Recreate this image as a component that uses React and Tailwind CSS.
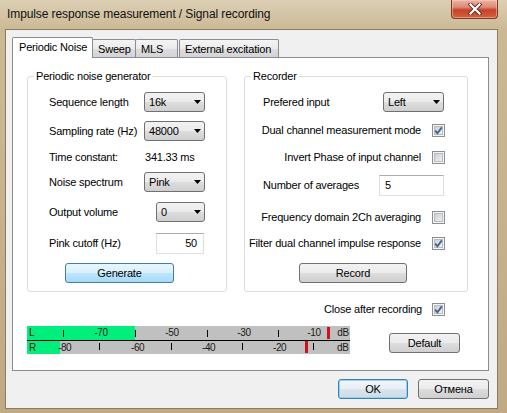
import React from 'react';

const Combo = ({ value, className }) => (
  <div className={`h-[20px] flex items-center pl-[4px] pr-[3px] border border-[#707070] rounded-[3px] bg-[linear-gradient(#f2f2f2,#ebebeb_48%,#dddddd_52%,#cfcfcf)] ${className}`}>
    <span className="flex-1">{value}</span>
    <svg width="7" height="4" viewBox="0 0 7 4"><path d="M0 0H7L3.5 4Z" fill="#000" /></svg>
  </div>
);

const Check = ({ checked }) => (
  <span className="relative w-[13px] h-[13px] shrink-0 border border-[#8e8f8f] bg-[#f4f4f4] p-px flex">
    <span className="flex-1 border border-[#b9bdc2] bg-[linear-gradient(135deg,#cbd0d6,#eef0f2)]" />
    {checked && (
      <svg className="absolute inset-0" width="11" height="11" viewBox="0 0 11 11">
        <path d="M2.2 5.6L4.4 8.2L8.8 2.4" fill="none" stroke="#4a5f8e" strokeWidth="1.8" />
      </svg>
    )}
  </span>
);

const Field = ({ value, className }) => (
  <div className={`h-[21px] flex items-center bg-white border border-[#dbdfe6] border-t-[#abadb3] ${className}`}>
    {value}
  </div>
);

const btnGray = 'border-[#707070] bg-[linear-gradient(#f2f2f2,#ebebeb_48%,#dddddd_52%,#cfcfcf)]';

const Tick = ({ x, top }) => (
  <span className={`absolute w-px h-[7px] bg-black ${top}`} style={{ left: x }} />
);

const Lbl = ({ x, children }) => (
  <span className="absolute top-0 -translate-x-1/2" style={{ left: x }}>{children}</span>
);

const Meter = () => (
  <div className="w-[323px] h-[28px] bg-[#c0c0c0] flex flex-col text-[10px] leading-[14px] tracking-[-0.4px] text-[#1a1a1a]">
    <div className="relative h-[14px]">
      <div className="absolute left-0 top-0 h-full w-[108px] bg-[#00ef7c]" />
      <span className="absolute left-[2px] top-0">L</span>
      {[36, 108, 180, 251].map((x) => <Tick key={x} x={x} top="top-[4px]" />)}
      <Lbl x={74}>-70</Lbl>
      <Lbl x={145}>-50</Lbl>
      <Lbl x={217}>-30</Lbl>
      <Lbl x={287}>-10</Lbl>
      <Lbl x={316}>dB</Lbl>
      <span className="absolute left-[300px] top-[1px] w-[3px] h-[12px] bg-[#d0101a]" />
    </div>
    <div className="h-px bg-black" />
    <div className="relative h-[13px]">
      <div className="absolute left-0 top-0 h-full w-[33px] bg-[#00ef7c]" />
      <span className="absolute left-[2px] top-0 leading-[13px]">R</span>
      {[72, 144, 215, 286].map((x) => <Tick key={x} x={x} top="top-[2px]" />)}
      <span className="absolute top-0 left-[31px] leading-[13px]">-80</span>
      <span className="absolute top-0 left-[104px] leading-[13px]">-60</span>
      <span className="absolute top-0 left-[175px] leading-[13px]">-40</span>
      <span className="absolute top-0 left-[246px] leading-[13px]">-20</span>
      <span className="absolute top-0 left-[310px] leading-[13px]">dB</span>
      <span className="absolute left-[278px] top-0 w-[3px] h-[12px] bg-[#d0101a]" />
    </div>
  </div>
);

const CheckRow = ({ label, checked, className }) => (
  <div className={`h-[13px] flex items-center justify-end gap-[11px] pr-[22px] ${className}`}>
    <span>{label}</span>
    <Check checked={checked} />
  </div>
);

export default function App() {
  return (
    <div className="w-[507px] h-[413px] overflow-hidden flex flex-col bg-[linear-gradient(#dccfb4,#cbb995_30px,#c0aa86)] font-['Liberation_Sans',Arial,sans-serif] text-[11px] leading-[15px] tracking-[-0.2px] text-black">
      {/* title bar */}
      <div className="h-[29px] shrink-0 flex justify-between">
        <span className="self-center pl-[7px] text-[12px] tracking-[-0.1px] text-[#111]">Impulse response measurement / Signal recording</span>
        <div className="w-[47px] h-[19px] mr-[9px] rounded-b-[4px] border border-t-0 border-[#7d3a2b] bg-[linear-gradient(#ebb3a4,#dc8a76_40%,#c6432b_55%,#d6603f)] flex items-center justify-center shadow-[inset_0_0_0_1px_rgba(255,220,200,0.45)]">
          <svg width="14" height="12" viewBox="0 0 14 12">
            <path d="M2.5 1.5L11.5 10.5M11.5 1.5L2.5 10.5" stroke="#5a2a20" strokeWidth="4" strokeLinecap="square" />
            <path d="M2.5 1.5L11.5 10.5M11.5 1.5L2.5 10.5" stroke="#ffffff" strokeWidth="2.2" strokeLinecap="square" />
          </svg>
        </div>
      </div>

      {/* client area */}
      <div className="ml-[5px] w-[493px] h-[380px] border border-[#8c7b5d] bg-[#f0f0f0] flex flex-col">
        {/* tabs */}
        <div className="flex items-end h-[20px] mt-[7px] ml-[6px]">
          <div className="relative z-10 h-[21px] -mb-px w-[81px] bg-white border border-b-0 border-[#898c95] rounded-t-[2px] pl-[6px] leading-[19px]">Periodic Noise</div>
          <div className="h-[18px] w-[44px] -ml-px border border-b-0 border-[#898c95] rounded-t-[2px] bg-[linear-gradient(#f4f4f4,#ebebeb_50%,#dddddd_51%,#d4d4d4)] pl-[5px] leading-[18px]">Sweep</div>
          <div className="h-[18px] w-[43px] -ml-px border border-b-0 border-[#898c95] rounded-t-[2px] bg-[linear-gradient(#f4f4f4,#ebebeb_50%,#dddddd_51%,#d4d4d4)] pl-[5px] leading-[18px]">MLS</div>
          <div className="h-[18px] w-[100px] ml-px border border-b-0 border-[#898c95] rounded-t-[2px] bg-[linear-gradient(#f4f4f4,#ebebeb_50%,#dddddd_51%,#d4d4d4)] pl-[5px] leading-[18px]">External excitation</div>
        </div>

        {/* tab pane */}
        <div className="ml-[6px] w-[477px] h-[314px] border border-[#898c95] bg-white">
          <div className="ml-[14px] mt-[18px] w-[441px] flex flex-col">
            <div className="flex gap-[17px]">
              {/* generator */}
              <div className="w-[200px] h-[216px] border border-[#d5dfe5] rounded-[3px] flex flex-col">
                <span className="-mt-[8px] ml-[6px] px-[2px] h-[15px] bg-white self-start">Periodic noise generator</span>
                <div className="mt-[8px] h-[20px] flex items-center justify-between pl-[21px] pr-[21px]">
                  <span>Sequence length</span>
                  <Combo value="16k" className="w-[61px]" />
                </div>
                <div className="mt-[9px] h-[20px] flex items-center justify-between pl-[21px] pr-[21px]">
                  <span>Sampling rate (Hz)</span>
                  <Combo value="48000" className="w-[61px]" />
                </div>
                <div className="mt-[6px] h-[20px] flex items-center justify-between pl-[21px] pr-[21px]">
                  <span>Time constant:</span>
                  <span className="w-[61px] pl-px">341.33 ms</span>
                </div>
                <div className="mt-[5px] h-[20px] flex items-center justify-between pl-[21px] pr-[21px]">
                  <span>Noise spectrum</span>
                  <Combo value="Pink" className="w-[61px]" />
                </div>
                <div className="mt-[10px] h-[20px] flex items-center justify-between pl-[21px] pr-[21px]">
                  <span>Output volume</span>
                  <Combo value="0" className="w-[49px]" />
                </div>
                <div className="mt-[11px] h-[20px] flex items-center justify-between pl-[21px] pr-[22px]">
                  <span>Pink cutoff (Hz)</span>
                  <Field value="50" className="w-[48px] h-[20px] justify-end pr-[6px]" />
                </div>
                <div className="mt-[10px] ml-[37px] w-[109px] h-[20px] flex items-center justify-center border rounded-[3px] border-[#3c7fb1] bg-[linear-gradient(#eaf6fd,#d9f0fc_48%,#bee6fd_52%,#a7d9f5)]">Generate</div>
              </div>

              {/* recorder */}
              <div className="w-[224px] h-[216px] border border-[#d5dfe5] rounded-[3px] flex flex-col">
                <span className="-mt-[8px] ml-[6px] px-[2px] h-[15px] bg-white self-start">Recorder</span>
                <div className="mt-[8px] h-[20px] flex items-center justify-between pl-[18px] pr-[23px]">
                  <span>Prefered input</span>
                  <Combo value="Left" className="w-[61px]" />
                </div>
                <CheckRow label="Dual channel measurement mode" checked className="mt-[12px]" />
                <CheckRow label="Invert Phase of input channel" className="mt-[14px]" />
                <div className="mt-[11px] h-[21px] flex items-center justify-between pl-[18px] pr-[23px]">
                  <span>Number of averages</span>
                  <Field value="5" className="w-[65px] pl-[5px]" />
                </div>
                <CheckRow label="Frequency domain 2Ch averaging" className="mt-[15px]" />
                <CheckRow label="Filter dual channel impulse response" checked className="mt-[13px]" />
                <div className={`mt-[13px] ml-[54px] w-[108px] h-[20px] flex items-center justify-center border rounded-[3px] ${btnGray}`}>Record</div>
              </div>
            </div>

            <div className="mt-[11px] h-[13px] flex items-center justify-end gap-[10px] pr-[23px]">
              <span>Close after recording</span>
              <Check checked />
            </div>

            <div className="mt-[10px] flex items-start">
              <Meter />
              <div className={`ml-[39px] mt-[7px] w-[71px] h-[20px] flex items-center justify-center border rounded-[3px] ${btnGray}`}>Default</div>
            </div>
          </div>
        </div>

        {/* dialog buttons */}
        <div className="mt-[8px] flex justify-end gap-[10px] pr-[8px]">
          <div className="w-[70px] h-[20px] flex items-center justify-center border rounded-[3px] border-[#3c7fb1] bg-[linear-gradient(#f1f6fa,#e7eef4_48%,#d9e3ec_52%,#cfdbe6)] shadow-[inset_0_0_0_1px_#8fd3f5]">OK</div>
          <div className={`w-[71px] h-[20px] flex items-center justify-center border rounded-[3px] ${btnGray}`}>Отмена</div>
        </div>
      </div>
    </div>
  );
}
